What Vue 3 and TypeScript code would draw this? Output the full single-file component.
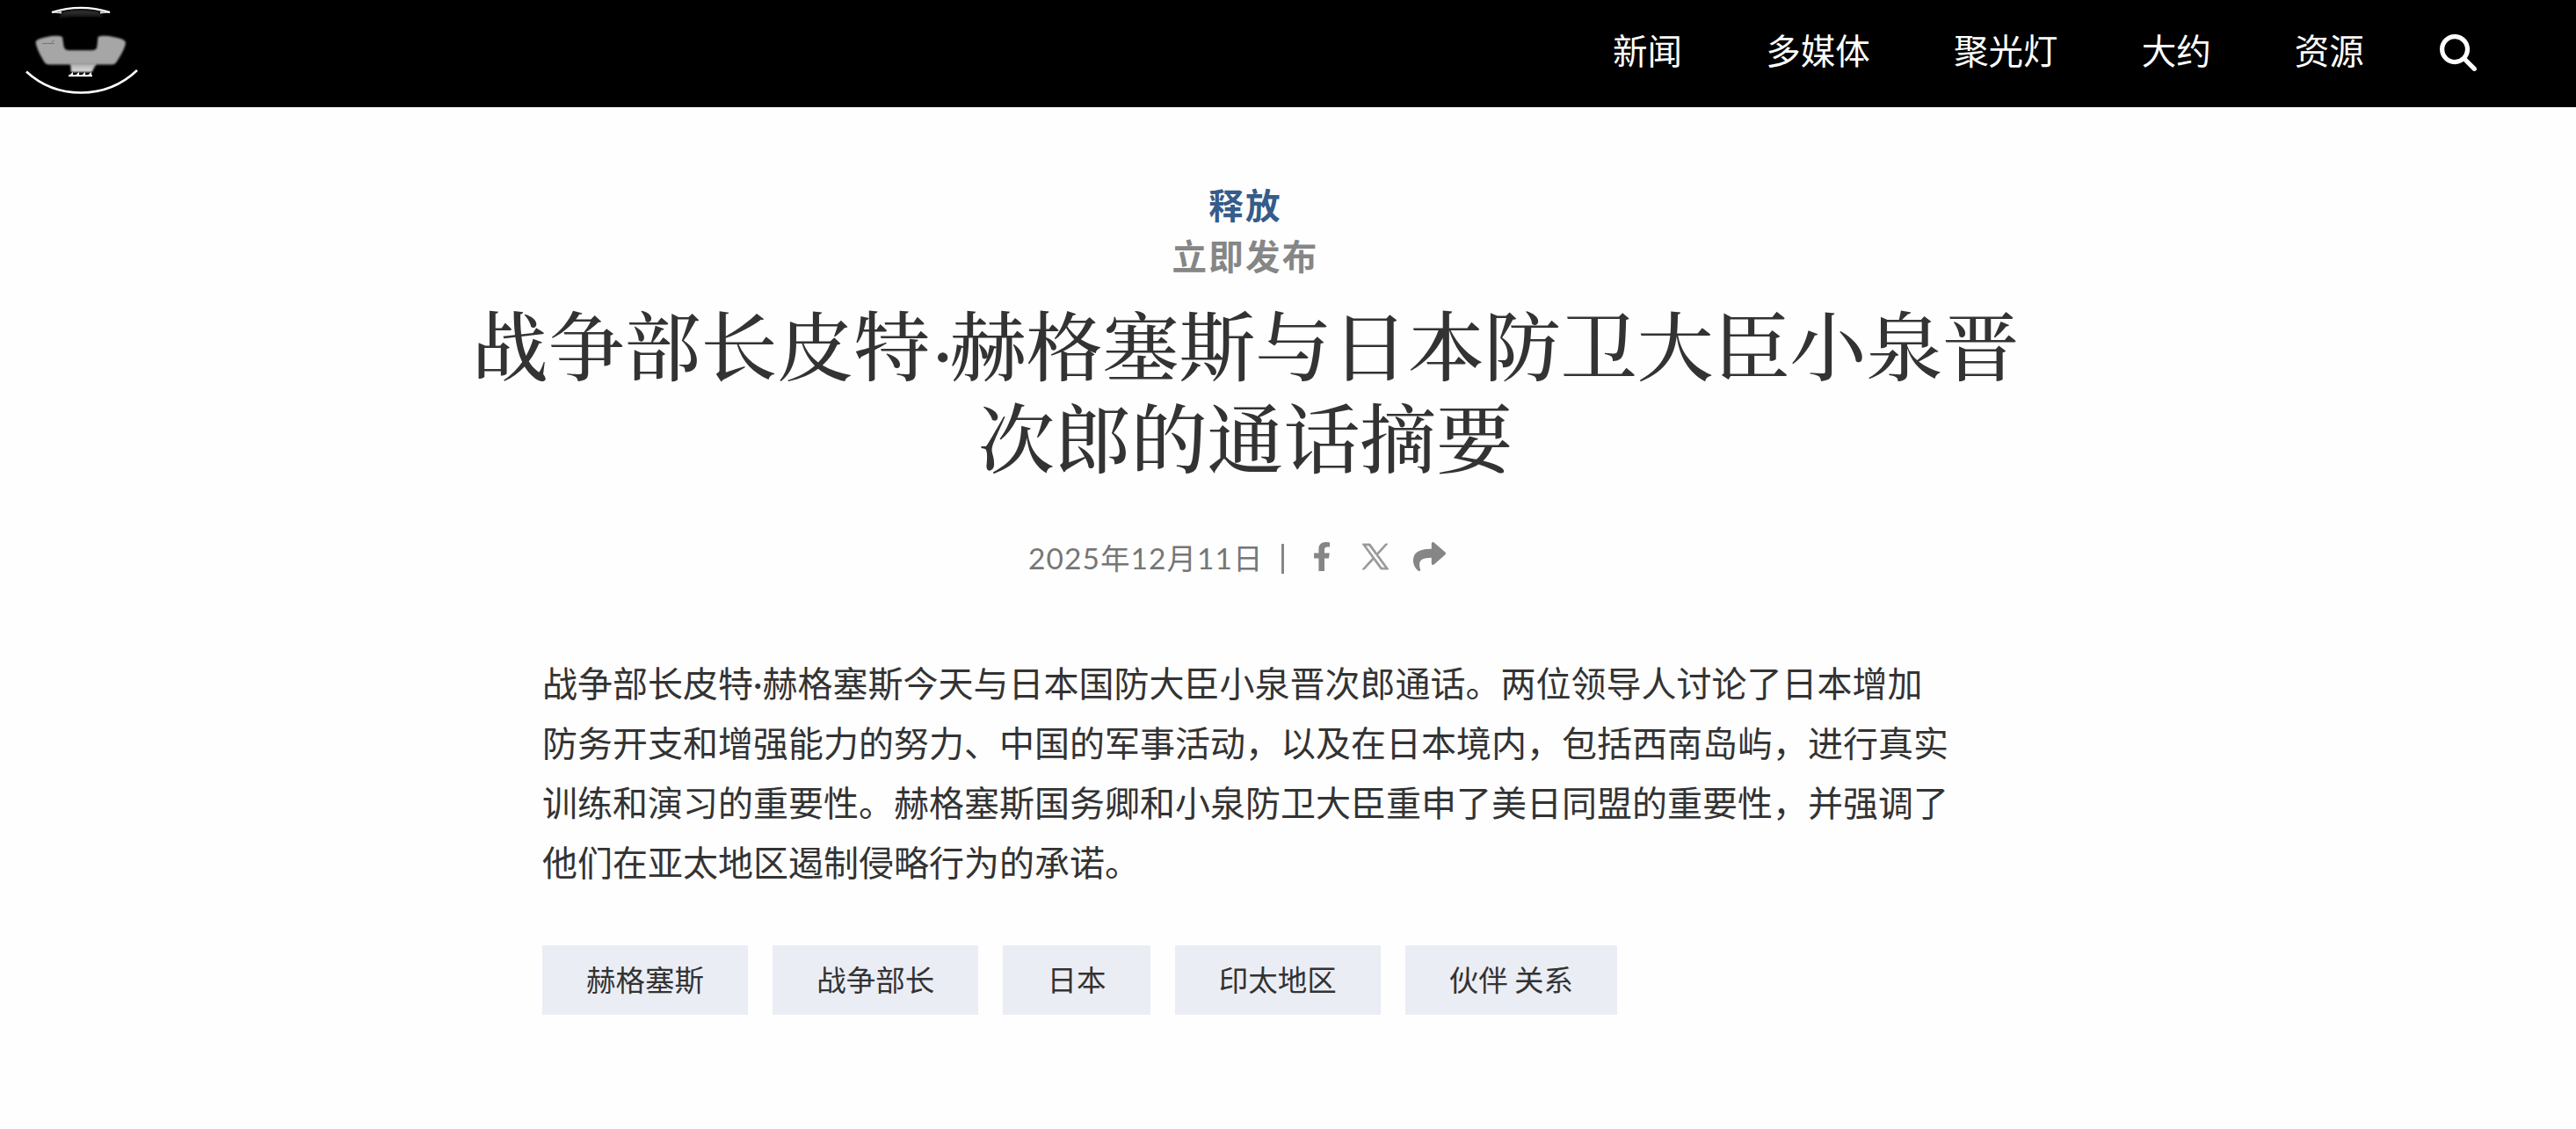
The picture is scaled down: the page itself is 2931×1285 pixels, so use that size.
<script setup lang="ts">
const navItems: string[] = ['新闻', '多媒体', '聚光灯', '大约', '资源']

const titleLines: string[][] = [
  ['战争部长皮特', '赫格塞斯与日本防卫大臣小泉晋'],
  ['次郎的通话摘要'],
]

const bodyLines: string[][] = [
  ['战争部长皮特', '赫格塞斯今天与日本国防大臣小泉晋次郎通话。两位领导人讨论了日本增加'],
  ['防务开支和增强能力的努力、中国的军事活动，以及在日本境内，包括西南岛屿，进行真实'],
  ['训练和演习的重要性。赫格塞斯国务卿和小泉防卫大臣重申了美日同盟的重要性，并强调了'],
  ['他们在亚太地区遏制侵略行为的承诺。'],
]

const tags: string[] = ['赫格塞斯', '战争部长', '日本', '印太地区', '伙伴 关系']
</script>

<template>
  <div class="page">
    <header class="header">
      <svg class="logo" viewBox="0 0 150 122" width="150" height="122">
        <defs>
          <filter id="soft" x="-20%" y="-20%" width="140%" height="140%">
            <feGaussianBlur stdDeviation="0.9" />
          </filter>
          <linearGradient id="stem" x1="0" y1="0" x2="0" y2="1">
            <stop offset="0" stop-color="#a6a6a6" />
            <stop offset="1" stop-color="#e0e0e0" />
          </linearGradient>
          <linearGradient id="lid" x1="0" y1="0" x2="0" y2="1">
            <stop offset="0" stop-color="#3a3a3a" />
            <stop offset="1" stop-color="#0a0a0a" />
          </linearGradient>
        </defs>
        <path d="M52 13 Q72 10 92 13 L98 20 Q72 18 46 21Z" fill="url(#lid)" filter="url(#soft)" />
        <path d="M39 14.200 Q72 3.500 105 14.200" fill="none" stroke="#fff" stroke-width="2.400" />
        <path d="M40 14.500 l10 -1.500 v2.500z M104 14.500 l-10 -1.500 v2.500z" fill="#ddd" />
        <path
          d="M20.500 48 Q21 44.500 32 42.300 Q45 39.500 51 42 L52.500 52 Q53 57.200 58 57.200 H85 Q90.500 57.200 90.500 52 L91.500 42 Q97 39.500 110 42.300 Q123 44.500 123 49 Q122 56 113 70 Q111 73.500 107 73.500 H36 Q32 73.500 30 70 Q21.500 56 20.500 48Z"
          fill="#a6a6a6" filter="url(#soft)"
        />
        <path d="M28 49.500 H42 M38 48.500 l4 -3" stroke="#777" stroke-width="1" fill="none" />
        <path d="M60 72 H90 L84.500 82 H61Z" fill="url(#stem)" filter="url(#soft)" />
        <path d="M58 86.200 H85" stroke="#fff" stroke-width="2" />
        <path d="M59 85.500 l4 -3.500 v3.500z M66 85.500 l4 -3.500 v3.500z M73 85.500 l4 -3.500 v3.500z M80 85.500 l4 -3.500 v3.500z" fill="#fff" />
        <path d="M10 81.500 Q36 105.500 72 105.500 Q109 105.500 136 80" fill="none" stroke="#fff" stroke-width="2.600" />
      </svg>
      <nav class="nav">
        <a v-for="item in navItems" :key="item" class="nav-item">{{ item }}</a>
        <svg class="search" viewBox="0 0 512 512" width="42" height="42">
          <path
            fill="#fff"
            d="M416 208c0 45.900-14.900 88.300-40 122.700L502.600 457.400c12.500 12.500 12.500 32.800 0 45.300s-32.800 12.500-45.300 0L330.700 376c-34.400 25.200-76.800 40-122.700 40C93.100 416 0 322.900 0 208S93.100 0 208 0S416 93.100 416 208zM208 352a144 144 0 1 0 0-288 144 144 0 1 0 0 288z"
          />
        </svg>
      </nav>
    </header>

    <main class="article">
      <div class="kicker">释放</div>
      <div class="status">立即发布</div>
      <h1 class="title">
        <span v-for="(line, i) in titleLines" :key="i" class="line">
          <template v-for="(part, j) in line" :key="j"><span v-if="j > 0" class="dot">·</span>{{ part }}</template>
        </span>
      </h1>

      <div class="meta">
        <span class="date">2025年12月11日</span>
        <span class="bar"></span>
        <svg class="fb" viewBox="22 0 274 512" width="18" height="33" preserveAspectRatio="none">
          <path fill="#868686" d="M279.140 288l14.220-92.660h-88.910v-60.130c0-25.350 12.420-50.060 52.240-50.060h40.420V6.260S260.430 0 225.360 0c-73.220 0-121.080 44.380-121.080 124.720v70.620H22.890V288h81.390v224h100.170V288z" />
        </svg>
        <svg class="x" viewBox="0 0 1200 1227" width="30" height="29" preserveAspectRatio="none">
          <path fill="#999" stroke="#999" stroke-width="36" d="M714.163 519.284L1160.890 0H1055.030L667.137 450.887L357.328 0H0L468.492 681.821L0 1226.370H105.866L515.491 750.218L842.672 1226.370H1200L714.137 519.284H714.163ZM569.165 687.828L521.697 619.934L144.011 79.694H306.615L611.412 515.685L658.880 583.579L1055.080 1150.300H892.476L569.165 687.854V687.828Z" />
        </svg>
        <svg class="share" viewBox="0 0 512 448" width="37" height="33" preserveAspectRatio="none">
          <path fill="#868686" d="M503.700 157.800L327.700 5.800C312.300-7.500 288 3.300 288 24v80.100C127.400 105.900 0 138.100 0 290.300c0 61.400 39.600 122.300 83.300 154.100 13.700 9.900 33.100-2.500 28.100-18.600C66.100 280.800 132.900 242.300 288 240.100V328c0 20.700 24.300 31.500 39.700 18.200l176-152c11.100-9.600 11.100-26.800 0-36.400z" />
        </svg>
      </div>

      <p class="body">
        <span v-for="(line, i) in bodyLines" :key="i" class="line">
          <template v-for="(part, j) in line" :key="j"><span v-if="j > 0" class="dot">·</span>{{ part }}</template>
        </span>
      </p>

      <div class="tags">
        <a v-for="tag in tags" :key="tag" class="tag">{{ tag }}</a>
      </div>
    </main>
  </div>
</template>

<style>
body {
  margin: 0;
  background: #fefefe;
}
</style>

<style scoped>
.page {
  width: 2931px;
  height: 1285px;
  overflow: hidden;
  background: #fefefe;
  font-family: Lato, "Noto Sans CJK SC", sans-serif;
  color: #333;
}
.header {
  box-sizing: border-box;
  height: 122px;
  padding: 0 113px 0 20px;
  background: #000;
  display: flex;
  align-items: center;
  justify-content: space-between;
}
.logo {
  display: block;
}
.nav {
  display: flex;
  align-items: center;
  gap: 95.200px;
  color: #fff;
  font-size: 39.500px;
  line-height: 60px;
}
.nav-item {
  margin-bottom: 7px;
  white-space: nowrap;
}
.search {
  margin-left: -9px;
  margin-bottom: 3px;
}
.article {
  width: 1762px;
  margin-left: 536px;
  padding-top: 83px;
}
.kicker,
.status {
  text-align: center;
  font-size: 39.500px;
  font-weight: 700;
  letter-spacing: 2.200px;
  line-height: 58px;
}
.kicker {
  color: #355c8a;
}
.status {
  color: #868686;
}
.title {
  margin: 16px 0 0;
  font-family: "Noto Serif CJK SC", "Noto Serif SC", serif;
  font-size: 86.900px;
  font-weight: 500;
  line-height: 105px;
  text-align: center;
}
.line {
  display: block;
  white-space: nowrap;
}
.dot {
  display: inline-block;
  width: 0.260em;
  line-height: 1;
  text-align: center;
}
.title .dot {
  box-sizing: border-box;
  width: 0.210em;
  margin-right: 0.050em;
  font-family: "Liberation Serif", serif;
  -webkit-text-stroke: 1px #333;
  transform: translateY(9px);
}
.meta {
  display: flex;
  align-items: center;
  height: 50px;
  margin: 61px 0 0 634px;
  color: #767676;
}
.date {
  width: 264px;
  font-size: 33.500px;
  letter-spacing: 1.050px;
  white-space: nowrap;
}
.bar {
  width: 3px;
  height: 34px;
  margin: 5px 0 0 24px;
  background: #868686;
}
.fb {
  margin-left: 34px;
}
.x {
  margin-left: 37px;
  overflow: visible;
}
.share {
  margin-left: 28px;
}
.body {
  margin: 86px 0 0 81px;
  font-size: 40px;
  line-height: 68px;
}
.tags {
  display: flex;
  gap: 28px;
  margin: 60px 0 0 81px;
}
.tag {
  padding: 0 50.100px;
  height: 79px;
  line-height: 79px;
  font-size: 33.500px;
  word-spacing: -1.500px;
  background: #ebedf5;
  white-space: nowrap;
}
</style>
